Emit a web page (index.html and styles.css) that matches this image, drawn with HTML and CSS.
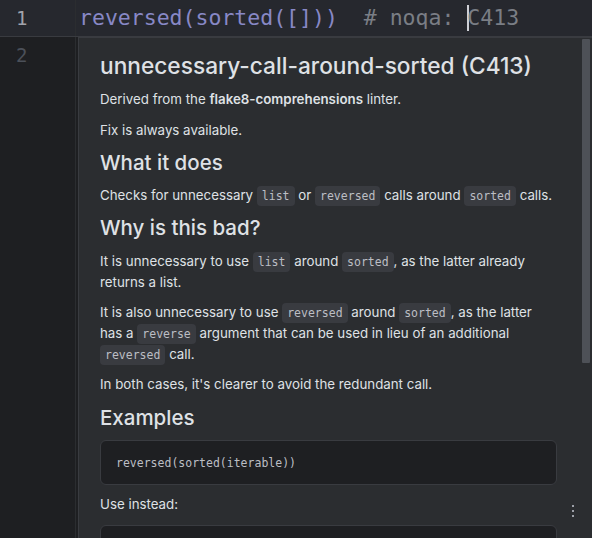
FILE: index.html
```html
<!DOCTYPE html>
<html>
<head>
<meta charset="utf-8">
<link rel="stylesheet" href="styles.css">
</head>
<body>
<div class="editor">
  <div class="line current">
    <div class="num">1</div>
    <div class="code"><span class="builtin">reversed(sorted([]))</span>  <span class="comment"># noqa: <span class="caret"></span>C413</span></div>
  </div>
  <div class="line">
    <div class="num dim">2</div>
    <div class="code"></div>
  </div>
  <div class="line filler">
    <div class="num"></div>
    <div class="code"></div>
  </div>

  <div class="popup">
    <div class="doc">
      <h1>unnecessary-call-around-sorted (C413)</h1>
      <p>Derived from the <b>flake8-comprehensions</b> linter.</p>
      <p>Fix is always available.</p>
      <h2>What it does</h2>
      <p>Checks for unnecessary <code>list</code> or <code>reversed</code> calls around <code>sorted</code> calls.</p>
      <h2>Why is this bad?</h2>
      <p>It is unnecessary to use <code>list</code> around <code>sorted</code>, as the latter already returns a list.</p>
      <p>It is also unnecessary to use <code>reversed</code> around <code>sorted</code>, as the latter has a <code>reverse</code> argument that can be used in lieu of an additional <code>reversed</code> call.</p>
      <p>In both cases, it's clearer to avoid the redundant call.</p>
      <h2>Examples</h2>
      <pre>reversed(sorted(iterable))</pre>
      <p>Use instead:</p>
      <pre>sorted(iterable, reverse=True)</pre>
    </div>
    <div class="scrollbar"></div>
    <div class="more"><i></i><i></i><i></i></div>
  </div>
</div>
</body>
</html>
```

FILE: styles.css
```css
html, body {
  margin: 0;
  padding: 0;
  background: #1e1f22;
}
body {
  width: 592px;
  height: 538px;
  overflow: hidden;
}
.editor {
  position: relative;
  width: 592px;
  height: 538px;
  display: flex;
  flex-direction: column;
  background: #1e1f22;
  font-family: "DejaVu Sans Mono", "Liberation Mono", monospace;
}
.line {
  display: flex;
  height: 37px;
  flex: none;
}
.line.filler {
  flex: 1;
}
.num {
  width: 76px;
  box-sizing: border-box;
  padding-left: 16px;
  border-right: 1px solid #2b2d30;
  font-size: 19px;
  line-height: 37px;
  color: #a1a3ab;
  flex: none;
}
.num.dim {
  color: #4b5059;
}
.code {
  flex: 1;
  padding-left: 3px;
  font-size: 21.5px;
  line-height: 36px;
  white-space: pre;
  color: #bcbec4;
}
.line.current {
  background: #26282e;
  border-bottom: 1px solid #393b40;
  height: 36px;
}
.line.current .num {
  line-height: 36px;
}
.builtin { color: #8888c6; }
.comment { color: #7a7e85; }
.caret {
  display: inline-block;
  width: 2px;
  height: 26px;
  margin-right: -2px;
  vertical-align: -6px;
  background: #ced0d6;
}

.popup {
  position: absolute;
  left: 78px;
  top: 37px;
  right: 0;
  bottom: 0;
  background: #2b2d30;
  border-left: 1px solid #393b40;
  border-top: 1px solid #393b40;
  overflow: hidden;
}
.doc {
  padding: 14px 35px 0 21px;
  display: flex;
  flex-direction: column;
  gap: 9.3px;
  font-family: Inter, "Noto Sans", sans-serif;
  font-size: 13.3px;
  line-height: 21px;
  color: #dfe1e5;
}
.doc h1 {
  margin: 0;
  font-size: 22.7px;
  line-height: 28px;
  font-weight: 500;
  color: #dfe1e5;
}
.doc h2 {
  margin: 0;
  font-size: 20.5px;
  line-height: 26px;
  font-weight: 500;
  color: #dfe1e5;
}
.doc p {
  margin: 0;
}
.doc b {
  font-weight: 600;
}
.doc code {
  font-family: "DejaVu Sans Mono", "Liberation Mono", monospace;
  font-size: 11.5px;
  line-height: 1;
  color: #bcbec4;
  background: #393b40;
  border-radius: 4px;
  padding: 3px 5px;
}
.doc pre {
  margin: 0;
  font-family: "DejaVu Sans Mono", "Liberation Mono", monospace;
  font-size: 11.5px;
  line-height: 17px;
  color: #bcbec4;
  background: #1e1f22;
  border: 1px solid #393b40;
  border-radius: 6px;
  padding: 14px 15px 12px;
}
.scrollbar {
  position: absolute;
  right: 2px;
  top: 1px;
  width: 8px;
  height: 324px;
  background: #4e5157;
  border-radius: 1px;
}
.more {
  position: absolute;
  left: 493px;
  top: 467px;
  display: flex;
  flex-direction: column;
  gap: 3px;
}
.more i {
  display: block;
  width: 2px;
  height: 2px;
  background: #9da0a8;
}
```
